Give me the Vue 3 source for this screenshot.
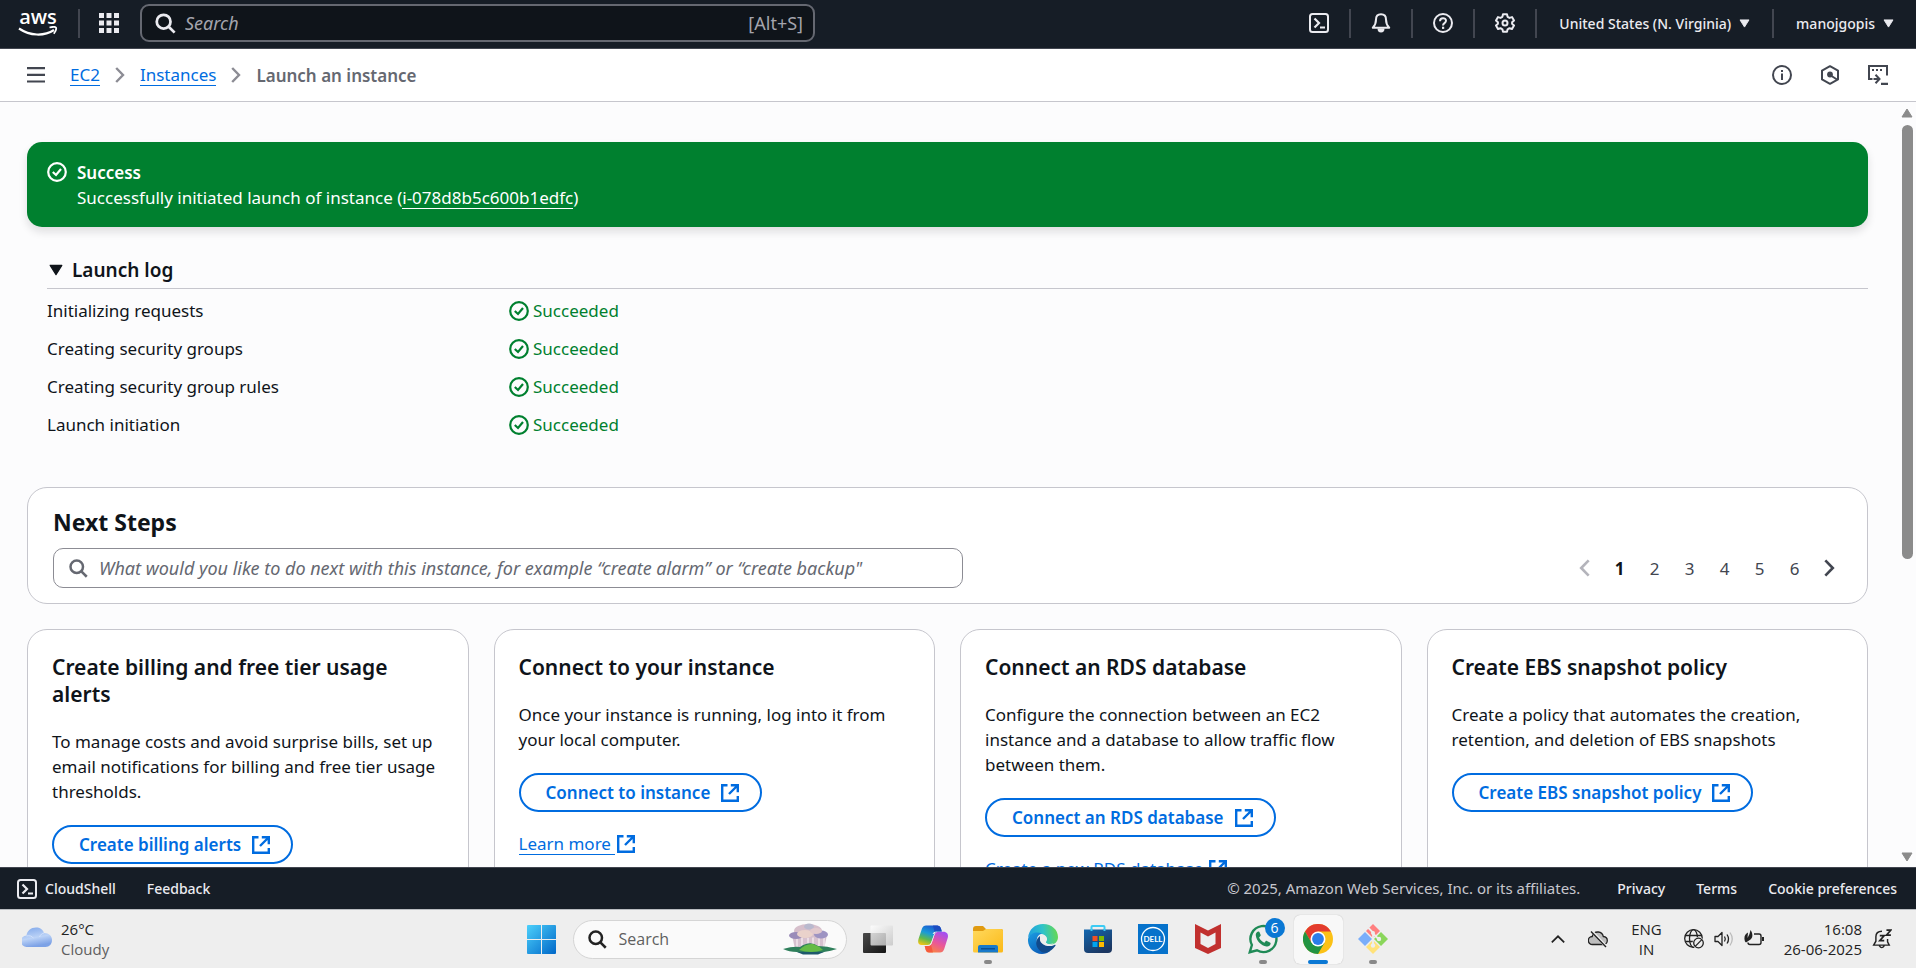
<script setup>
const logRows = [
  'Initializing requests',
  'Creating security groups',
  'Creating security group rules',
  'Launch initiation',
]
const pages = [1, 2, 3, 4, 5, 6]
const cards = [
  {
    title: 'Create billing and free tier usage alerts',
    text: 'To manage costs and avoid surprise bills, set up email notifications for billing and free tier usage thresholds.',
    action: 'Create billing alerts',
  },
  {
    title: 'Connect to your instance',
    text: 'Once your instance is running, log into it from your local computer.',
    action: 'Connect to instance',
    link: 'Learn more',
  },
  {
    title: 'Connect an RDS database',
    text: 'Configure the connection between an EC2 instance and a database to allow traffic flow between them.',
    action: 'Connect an RDS database',
    link: 'Create a new RDS database',
  },
  {
    title: 'Create EBS snapshot policy',
    text: 'Create a policy that automates the creation, retention, and deletion of EBS snapshots',
    action: 'Create EBS snapshot policy',
  },
]
const tools = [
  { icon: 'shell', label: 'CloudShell' },
  { icon: 'bell', label: 'Notifications' },
  { icon: 'help', label: 'Help' },
  { icon: 'gear', label: 'Settings' },
]
const apps = [
  { icon: 'taskview', label: 'Task view' },
  { icon: 'copilot', label: 'Copilot' },
  { icon: 'explorer', label: 'File Explorer', open: true },
  { icon: 'edge', label: 'Edge' },
  { icon: 'store', label: 'Store' },
  { icon: 'dell', label: 'Dell', caption: 'DELL' },
  { icon: 'mcafee', label: 'McAfee' },
  { icon: 'whatsapp', label: 'WhatsApp', open: true, badge: 6 },
  { icon: 'chrome', label: 'Chrome', open: true, active: true },
  { icon: 'git', label: 'Git', open: true },
]
</script>

<template>
  <div class="screen">
    <svg class="defs" aria-hidden="true">
      <defs>
        <linearGradient id="g-win" x1="0" y1="0" x2="1" y2="1">
          <stop offset="0" stop-color="#4cd0fb" /><stop offset="1" stop-color="#0067c8" />
        </linearGradient>
        <linearGradient id="g-cloud" x1="0" y1="0" x2="0.3" y2="1">
          <stop offset="0" stop-color="#7ea6ea" /><stop offset="0.6" stop-color="#bcd3f7" /><stop offset="1" stop-color="#7da2e6" />
        </linearGradient>
        <linearGradient id="g-folder" x1="0" y1="0" x2="1" y2="1">
          <stop offset="0" stop-color="#ffd95e" /><stop offset="1" stop-color="#fbb917" />
        </linearGradient>
        <linearGradient id="g-edge1" x1="0" y1="0.4" x2="1" y2="0.3">
          <stop offset="0" stop-color="#1f9fdf" /><stop offset="0.5" stop-color="#2fc3c9" /><stop offset="1" stop-color="#68d94c" />
        </linearGradient>
        <linearGradient id="g-edge2" x1="0" y1="0" x2="0.6" y2="1">
          <stop offset="0" stop-color="#1b9de2" /><stop offset="1" stop-color="#0a5cb8" />
        </linearGradient>
        <linearGradient id="g-store" x1="0" y1="0" x2="0.6" y2="1">
          <stop offset="0" stop-color="#1267b0" /><stop offset="1" stop-color="#1c3761" />
        </linearGradient>
        <linearGradient id="g-co1" x1="0.6" y1="0" x2="0.2" y2="1">
          <stop offset="0" stop-color="#1b58d0" /><stop offset="0.4" stop-color="#1a9bd8" /><stop offset="0.7" stop-color="#5fb94d" /><stop offset="1" stop-color="#f0c514" />
        </linearGradient>
        <linearGradient id="g-co2" x1="0.7" y1="0" x2="0.2" y2="1">
          <stop offset="0" stop-color="#a44ff0" /><stop offset="0.5" stop-color="#e9569a" /><stop offset="1" stop-color="#fb8a38" />
        </linearGradient>
        <linearGradient id="g-dark" x1="0" y1="0" x2="1" y2="1">
          <stop offset="0" stop-color="#4a4a4a" /><stop offset="1" stop-color="#151515" />
        </linearGradient>
        <linearGradient id="g-light" x1="0" y1="0" x2="1" y2="1">
          <stop offset="0" stop-color="#ffffff" /><stop offset="1" stop-color="#c4c4c4" />
        </linearGradient>
      </defs>

      <symbol id="i-apps" viewBox="0 0 20 20">
        <path fill="currentColor" d="M0 0h5v5H0zM7.500 0h5v5h-5zM15 0h5v5h-5zM0 7.500h5v5H0zM7.500 7.500h5v5h-5zM15 7.500h5v5h-5zM0 15h5v5H0zM7.500 15h5v5h-5zM15 15h5v5h-5z" />
      </symbol>
      <symbol id="i-search" viewBox="0 0 16 16">
        <g fill="none" stroke="currentColor" stroke-width="2"><circle cx="7" cy="7" r="5" /><path d="m10.500 10.500 4.500 4.500" /></g>
      </symbol>
      <symbol id="i-shell" viewBox="0 0 20 20">
        <g fill="none" stroke="currentColor" stroke-width="2"><rect x="1" y="1" width="18" height="18" rx="2.500" /><path d="m5.500 5.500 4.500 4.500-4.500 4.500M11 14.500h5" stroke-width="2.200" /></g>
      </symbol>
      <symbol id="i-bell" viewBox="0 0 20 20">
        <path fill="none" stroke="currentColor" stroke-width="2" stroke-linejoin="round" d="M10 1.300C6.800 1.300 5 3.500 5 6.500c0 4-1 6-3.200 8.300h16.400C16 12.500 15 10.500 15 6.500c0-3-1.800-5.200-5-5.200z" />
        <path fill="currentColor" d="M6.500 15.500h7a3.500 4 0 0 1-7 0z" />
      </symbol>
      <symbol id="i-help" viewBox="0 0 20 20">
        <g fill="none" stroke="currentColor" stroke-width="2"><circle cx="10" cy="10" r="9" /><path d="M7 8.200c0-4 6-4 6-.4 0 2.400-3 2.200-3 4.700" /></g>
        <rect x="9" y="13.700" width="2.200" height="2.200" fill="currentColor" />
      </symbol>
      <symbol id="i-gear" viewBox="0 0 20 20">
        <g fill="none" stroke="currentColor" stroke-width="2" stroke-linejoin="round"><path d="M8 1.200h4l.6 2.600 1.900 1.100 2.500-.8 2 3.400-1.900 1.800v1.500l1.900 1.800-2 3.400-2.500-.8-1.900 1.100-.6 2.500H8l-.6-2.500-1.900-1.100-2.500.8-2-3.400 1.900-1.800V9.300L1 7.500l2-3.400 2.500.8 1.900-1.100z" /><circle cx="10" cy="10" r="2.500" /></g>
      </symbol>
      <symbol id="i-menu" viewBox="0 0 18 16">
        <path fill="currentColor" d="M0 0h18v2.200H0zM0 6.700h18v2.200H0zM0 13.400h18v2.200H0z" />
      </symbol>
      <symbol id="i-chev" viewBox="0 0 10 16">
        <path fill="none" stroke="currentColor" stroke-width="2.400" d="m1.200 1 6.800 7-6.800 7" />
      </symbol>
      <symbol id="i-info" viewBox="0 0 20 20">
        <circle cx="10" cy="10" r="9" fill="none" stroke="currentColor" stroke-width="2" />
        <path fill="currentColor" d="M9 5h2v2H9zM9 8.500h2V15H9z" />
      </symbol>
      <symbol id="i-hex" viewBox="0 0 20 20">
        <path fill="none" stroke="currentColor" stroke-width="2" stroke-linejoin="round" d="m10 1.200 8 4.400v8.800l-8 4.400-8-4.400V5.600z" />
        <circle cx="10" cy="9.500" r="2.900" fill="currentColor" /><path d="m10 10 7 4.500" stroke="currentColor" stroke-width="2" />
      </symbol>
      <symbol id="i-console" viewBox="0 0 20 20">
        <path fill="none" stroke="currentColor" stroke-width="2" d="M4.500 14H1V1h18v9.500M5.500 14h5.500M7.500 9.800l4 4.200-4 4.200" />
        <path fill="currentColor" d="M4 4h2v2H4zM8 4h2v2H8zM12 4h2v2h-2zM13 17.700h7V20h-7z" />
      </symbol>
      <symbol id="i-check" viewBox="0 0 20 20">
        <g fill="none" stroke="currentColor" stroke-width="2.200"><circle cx="10" cy="10" r="8.800" /><path d="m5.800 10 3.200 3 5-6" /></g>
      </symbol>
      <symbol id="i-ext" viewBox="0 0 18 18">
        <g fill="none" stroke="currentColor" stroke-width="2.400"><path d="M6.500 1.200H1.200v15.600h15.600V12" /><path d="M9.800 1.200h7v7M8 10l8.500-8.500" /></g>
      </symbol>
      <symbol id="i-caret" viewBox="0 0 12 10"><path fill="currentColor" stroke="currentColor" stroke-linejoin="round" d="M1 1h10L6 9z" /></symbol>

      <symbol id="i-weather" viewBox="0 0 30 20">
        <path fill="url(#g-cloud)" d="M5 20a5.500 5.500 0 0 1-.5-11.500C5 4 9 .5 14 .5c4 0 7 2 8 5.500 5 0 8 3 8 7 0 4-2.500 7-6.500 7z" />
        <path fill="none" stroke="#d7e5fc" stroke-width="1" d="M4.500 9c3-.8 5.500 0 7 2.300M17.500 10c1-2.500 2.600-3.700 4.700-4" opacity=".8" />
      </symbol>
      <symbol id="i-win" viewBox="0 0 29 29">
        <path fill="url(#g-win)" d="M0 1q0-1 1-1h13v14H0zM15 0h13q1 0 1 1v13H15zM0 15h14v14H1q-1 0-1-1zM15 15h14v13q0 1-1 1H15z" />
      </symbol>
      <symbol id="i-storm" viewBox="0 0 54 32">
        <path fill="#cdb3c4" d="M9 12h35l-3 14H12z" opacity=".8" />
        <path stroke="#f1e4ea" stroke-width="1.600" d="M14 14v11M19 14v10M25 14v9M30 14v10M36 14v10M41 14v10" />
        <ellipse cx="25" cy="8" rx="14" ry="7" fill="#d6bfcb" /><ellipse cx="13" cy="12.500" rx="7" ry="3.500" fill="#9a8cb9" /><ellipse cx="38" cy="11.500" rx="7" ry="4" fill="#9d93c2" />
        <ellipse cx="22" cy="11" rx="8" ry="4" fill="#ead2cb" /><ellipse cx="26" cy="3.500" rx="5" ry="3" fill="#b9b9ce" /><ellipse cx="33" cy="8" rx="6" ry="3" fill="#e2c9cd" />
        <path fill="#2f7f5b" d="M0 26q10-3 17-2 10-7 18-1 9 0 19 3-6 2-13 3-14 4-27 0Q6 29 0 26z" />
        <path fill="#65bb46" d="M16 27q7-7 14-6 6 2 10 6-12 4-24 0z" /><path fill="#1e596b" d="M14 29h27l-6 2.500H20z" />
      </symbol>
      <symbol id="i-taskview" viewBox="0 0 30 30">
        <rect y="9" width="23" height="20" rx="1" fill="url(#g-dark)" /><rect x="7.500" y="1.500" width="22.500" height="20" rx="1" fill="url(#g-light)" opacity=".82" />
      </symbol>
      <symbol id="i-copilot" viewBox="0 0 30 30">
        <path fill="url(#g-co1)" d="M8 1.500h11.500q2.500 0 3.300 2.500l1 3.500h-4.300q-2.500 0-3.400 2.800l-3 8.400q-1 2.300-3.500 2.300H3.500Q-1 20.500.5 15L4 4.500q1.200-3 4-3z" />
        <path fill="url(#g-co2)" d="M22 28.500H11q-2.500 0-3.300-2.500l-1-4h3.800q2.300 0 3.100-2.500l3-9q1-2.800 3.400-2.800h6.500Q31 9 29.700 14l-3.500 11q-1.200 3.500-4.200 3.500z" />
        <path fill="#1c49bd" d="M15 1.500h4.500q2.500 0 3.300 2.500l1 3.500h-4.300q-1.800 0-2.700 1.500z" opacity=".8" />
        <path fill="#f4503b" d="M15 28.500h-4q-2.500 0-3.300-2.500l-1-4h3.800q1.500 0 2.500-1.200z" opacity=".8" />
        <path fill="#eee" d="M14.500 9.500q1.500-2 4-2h1q-2.500 0-3.400 2.800l-3 8.400Q12 21 10 22q2.800-.5 3.600-2.800l3-9z" />
      </symbol>
      <symbol id="i-explorer" viewBox="0 0 30 30">
        <path fill="#e09a10" d="M0 5q0-3 3-3h7l3 3h15q2 0 2 2v8H0z" /><path fill="url(#g-folder)" d="M0 7h10l3-2h15q2 0 2 2v20q0 1.500-1.500 1.500h-27Q0 28.500 0 27z" />
        <path fill="#1879ca" d="M5 28.500V23q0-2 2-2h16q2 0 2 2v5.500z" /><path fill="#0a4f94" d="M8 24h14v1.500H8z" />
      </symbol>
      <symbol id="i-edge" viewBox="0 0 30 30">
        <path fill="url(#g-edge1)" d="M0 14C1 5 7 0 15 0c9 0 15 6 15 13 0 5-3.500 7.500-7.500 7.500-3 0-5-1.200-4.500-2.500 2.500-3 .5-7-4-8C8 8.500 2 10 0 14z" />
        <path fill="url(#g-edge2)" d="M0 15c1.500-6 8-8 14-5.500-4 1-6 5-5 9.500 1 5 6 9 13 8-2 2-5 3-8 3C5 29.500-.5 22.500 0 15z" />
        <path fill="#114a8b" d="M12 12c-4 3-5 8-2 12.500 3 4.500 8 5.500 12 2.500 2.500-1.700 4.500-3.500 5.700-5.700-.2-.8-.7-.7-1.200-.4-6 3-14 .1-14.500-5.400-.1-1.500 0-2.500 0-3.500z" />
        <path fill="#eee" d="M12.500 12.500c2-1.500 6-.5 6 2.500 0 1.500-1.300 2-.8 3.300 1.300 2.200 5.300 2.200 8 1-4 3.500-13.500 1-13.700-4.300 0-1 0-1.700.5-2.500z" />
      </symbol>
      <symbol id="i-store" viewBox="0 0 30 30">
        <path fill="none" stroke="#3ccbf4" stroke-width="2" d="M8.500 7V3q0-1 1-1h11q1 0 1 1v4" />
        <path fill="url(#g-store)" d="M1 5.500h28V25q0 4-4 4H5q-4 0-4-4z" /><path stroke="#3ccbf4" stroke-width="2" d="M8.500 5v2M21.500 5v2" />
        <path fill="#f25022" d="M9.500 12h5v5h-5z" /><path fill="#7fba00" d="M16 12h5v5h-5z" /><path fill="#00a4ef" d="M9.500 18h5v5h-5z" /><path fill="#ffb900" d="M16 18h5v5h-5z" />
      </symbol>
      <symbol id="i-dell" viewBox="0 0 30 30">
        <path fill="#0672cb" d="M0 0h30v30H0z" /><circle cx="15" cy="15" r="11.500" fill="none" stroke="#fff" stroke-width="1.300" />
      </symbol>
      <symbol id="i-mcafee" viewBox="0 0 30 30">
        <path fill="#c1302e" fill-rule="evenodd" d="m2 0 13 6.500L28 0v24l-13 6-13-6zM7.500 8.500V20l7.500 4 7.500-4V8.500L15 12.500z" />
      </symbol>
      <symbol id="i-whatsapp" viewBox="0 0 30 30">
        <path fill="none" stroke="#1f8a56" stroke-width="2.400" d="M1.800 28.200 3.900 21A13 13 0 1 1 9 26.300z" />
        <path fill="#1f8a56" d="M10.300 7.500c-1.700.4-2.800 2-2.500 4 .8 5.500 5.300 10 10.700 11 2 .3 3.700-.8 4.100-2.700.1-.7-.1-1-.7-1.300l-3-1.500c-.5-.2-.9-.2-1.300.2l-1.200 1.500c-2.500-1-4.300-2.800-5.300-5.200l1.300-1.400c.4-.4.4-.8.2-1.300l-1.200-2.700c-.2-.5-.5-.7-1.100-.6z" />
      </symbol>
      <symbol id="i-chrome" viewBox="0 0 30 30">
        <circle cx="15" cy="15" r="15" fill="#fbc116" /><path fill="#e33b2e" d="M2 7.500a15 15 0 0 1 26 0H15L8.500 18.700z" />
        <path fill="#229342" d="M2 7.500A15 15 0 0 0 15 30l6.500-11.300H8.500z" /><circle cx="15" cy="15" r="7.500" fill="#fff" /><circle cx="15" cy="15" r="5.900" fill="#2b7de9" />
      </symbol>
      <symbol id="i-git" viewBox="0 0 30 30">
        <path fill="#ff7f7f" d="m15 0 7 7-7 7-7-7z" /><path fill="#8ad65b" d="m23 8 7 7-7 7-7-7z" /><path fill="#ffe27a" d="m15 16 7 7-7 7-7-7z" /><path fill="#7aaefa" d="m7 8 7 7-7 7-7-7z" />
        <path fill="none" stroke="#eee" stroke-width="1.800" d="m10 3.500 5 5V21M15 9.500l6 6" /><circle cx="15" cy="9" r="2" fill="#eee" /><circle cx="21" cy="15" r="2.200" fill="#eee" /><circle cx="15" cy="21.500" r="2.200" fill="#eee" />
      </symbol>
      <symbol id="i-up" viewBox="0 0 14 8"><path fill="none" stroke="currentColor" stroke-width="1.700" d="m.8 7.300 6.200-6 6.200 6" /></symbol>
      <symbol id="i-offcloud" viewBox="0 0 20 18">
        <path fill="#bdbdbd" stroke="#222" stroke-width="1.300" d="M4.500 14.500a4 4 0 0 1-.3-8C5 3.500 7.500 1.800 10.300 2c2.700.2 4.500 2 5 4.500 2.500.3 4 2 4 4s-1.500 4-4 4z" />
        <path stroke="#eee" stroke-width="3" d="m4 1.500 14 15" /><path stroke="#222" stroke-width="1.400" d="m3 1.500 15 15.500" />
      </symbol>
      <symbol id="i-globe" viewBox="0 0 20 20">
        <g fill="none" stroke="#222" stroke-width="1.300"><circle cx="9.500" cy="9.500" r="8.800" /><ellipse cx="9.500" cy="9.500" rx="4" ry="8.800" /><path d="M1.500 6.500h16M1.500 12.500h8" /></g>
        <circle cx="14.500" cy="14" r="6" fill="#eee" /><g fill="none" stroke="#222" stroke-width="1.300"><circle cx="14.500" cy="14" r="4.800" /><path d="m11.200 17.400 6.600-6.800" /></g>
      </symbol>
      <symbol id="i-sound" viewBox="0 0 20 18">
        <g fill="none" stroke="#222" stroke-width="1.300" stroke-linejoin="round"><path d="M1 6.500h3l4-4v13l-4-4H1z" /><path d="M10.500 6.500q1.600 2.500 0 5M13 4.500q3 4.500 0 9" /></g>
        <path fill="none" stroke="#bbb" stroke-width="1.300" d="M16 2.500q4.500 6.500 0 13" />
      </symbol>
      <symbol id="i-battery" viewBox="0 0 20 18">
        <path fill="none" stroke="#222" stroke-width="1.400" d="M10 4h5q2 0 2 2v6.500q0 2-2 2H6q-2 0-2-2" />
        <path fill="#222" d="M18 7h2v4h-2zM6.500 0C9 3 9.500 9 5 10.500L2 12.500 1 11.500C-.5 7 1 4 4 2.500L3.500 8 5.500 4z" />
      </symbol>
      <symbol id="i-dnd" viewBox="0 0 18 18">
        <path fill="none" stroke="#222" stroke-width="1.300" d="M9 2C5.500 2 3.500 4 3.500 7v4L1.500 14.500h14l-1.500-3V9M6.500 15q2.300 3.500 4.600 0" />
        <path fill="none" stroke="#222" stroke-width="1.500" d="M7 6h4l-4 4.500h4M13 1h4l-4 4.500h4" />
      </symbol>
    </svg>

    <header class="topnav">
      <a class="logo" href="#" aria-label="AWS home">
        <span>aws</span>
        <svg viewBox="0 0 40 12"><path fill="none" stroke="#fff" stroke-width="2.200" d="M1 2.500c11 7.500 25 8 35 1.500" /><path fill="none" stroke="#fff" stroke-width="1.800" d="M31.500 1.500c3-.8 6-.8 6.500.2.400 1-.6 4-2.200 6" /></svg>
      </a>
      <i class="sep"></i>
      <button class="icon-btn apps" aria-label="Services"><svg class="i20"><use href="#i-apps" /></svg></button>
      <label class="nav-search">
        <svg class="i22"><use href="#i-search" /></svg>
        <input type="search" placeholder="Search" aria-label="Search" />
        <span>[Alt+S]</span>
      </label>
      <div class="tools">
        <template v-for="t in tools" :key="t.icon">
          <button class="icon-btn tool" :aria-label="t.label"><svg class="i20"><use :href="'#i-' + t.icon" /></svg></button>
          <i class="sep"></i>
        </template>
        <button class="menu-btn">United States (N. Virginia)<svg><use href="#i-caret" /></svg></button>
        <i class="sep"></i>
        <button class="menu-btn">manojgopis<svg><use href="#i-caret" /></svg></button>
      </div>
    </header>

    <div class="crumbbar">
      <button class="icon-btn" aria-label="Open navigation"><svg class="menu"><use href="#i-menu" /></svg></button>
      <nav class="crumbs" aria-label="Breadcrumb">
        <a href="#">EC2</a>
        <svg><use href="#i-chev" /></svg>
        <a href="#">Instances</a>
        <svg><use href="#i-chev" /></svg>
        <span>Launch an instance</span>
      </nav>
      <div class="crumb-tools">
        <button class="icon-btn" aria-label="Info"><svg class="i20"><use href="#i-info" /></svg></button>
        <button class="icon-btn" aria-label="Resources"><svg class="i20"><use href="#i-hex" /></svg></button>
        <button class="icon-btn" aria-label="Console code"><svg class="i20"><use href="#i-console" /></svg></button>
      </div>
    </div>

    <div class="body">
      <main>
        <section class="alert" role="status">
          <svg class="i20"><use href="#i-check" /></svg>
          <div>
            <strong>Success</strong>
            <p>Successfully initiated launch of instance (<a href="#">i-078d8b5c600b1edfc</a>)</p>
          </div>
        </section>

        <section class="log">
          <h3><button><svg><use href="#i-caret" /></svg>Launch log</button></h3>
          <dl>
            <template v-for="r in logRows" :key="r">
              <dt>{{ r }}</dt>
              <dd><svg class="i20"><use href="#i-check" /></svg>Succeeded</dd>
            </template>
          </dl>
        </section>

        <section class="steps">
          <h2>Next Steps</h2>
          <div class="steps-row">
            <label class="find">
              <svg class="i20"><use href="#i-search" /></svg>
              <input type="search" aria-label="Find next step" placeholder="What would you like to do next with this instance, for example “create alarm” or “create backup&quot;" />
            </label>
            <nav class="pager" aria-label="Pagination">
              <button class="prev" disabled aria-label="Previous page"><svg><use href="#i-chev" /></svg></button>
              <button v-for="p in pages" :key="p" :class="{ current: p === 1 }">{{ p }}</button>
              <button aria-label="Next page"><svg><use href="#i-chev" /></svg></button>
            </nav>
          </div>
        </section>

        <section class="cards">
          <article v-for="c in cards" :key="c.title" class="card">
            <h3>{{ c.title }}</h3>
            <p>{{ c.text }}</p>
            <button class="pill">{{ c.action }}<svg class="i18"><use href="#i-ext" /></svg></button>
            <a v-if="c.link" href="#" class="more"><span>{{ c.link }}</span><svg class="i18"><use href="#i-ext" /></svg></a>
          </article>
        </section>
      </main>
      <div class="scrollbar" aria-hidden="true">
        <svg class="arrow flip"><use href="#i-caret" /></svg>
        <div class="track"><div class="thumb"></div></div>
        <svg class="arrow"><use href="#i-caret" /></svg>
      </div>
    </div>

    <footer class="foot">
      <button class="shell"><svg class="i20"><use href="#i-shell" /></svg>CloudShell</button>
      <a href="#">Feedback</a>
      <span class="copy">© 2025, Amazon Web Services, Inc. or its affiliates.</span>
      <a href="#">Privacy</a>
      <a href="#">Terms</a>
      <a href="#">Cookie preferences</a>
    </footer>

    <div class="taskbar">
      <div class="weather">
        <svg><use href="#i-weather" /></svg>
        <div><span>26°C</span><span class="dim">Cloudy</span></div>
      </div>
      <div class="dock">
        <button class="app" aria-label="Start"><svg class="i29"><use href="#i-win" /></svg></button>
        <label class="win-search">
          <svg class="i20"><use href="#i-search" /></svg>
          <input type="search" placeholder="Search" aria-label="Search Windows" />
          <svg class="storm"><use href="#i-storm" /></svg>
        </label>
        <button v-for="a in apps" :key="a.icon" class="app" :class="{ open: a.open, active: a.active }" :aria-label="a.label">
          <svg class="i30"><use :href="'#i-' + a.icon" /></svg>
          <span v-if="a.caption" class="caption">{{ a.caption }}</span>
          <span v-if="a.badge" class="badge">{{ a.badge }}</span>
        </button>
      </div>
      <div class="tray">
        <svg class="up"><use href="#i-up" /></svg>
        <svg class="off"><use href="#i-offcloud" /></svg>
        <div class="lang"><span>ENG</span><span>IN</span></div>
        <div class="status">
          <svg class="i20"><use href="#i-globe" /></svg>
          <svg class="i20"><use href="#i-sound" /></svg>
          <svg class="i20"><use href="#i-battery" /></svg>
        </div>
        <div class="clock"><span>16:08</span><span>26-06-2025</span></div>
        <svg class="i20"><use href="#i-dnd" /></svg>
      </div>
    </div>
  </div>
</template>

<style>
body { margin: 0; overflow: hidden; }
</style>

<style scoped>
* { box-sizing: border-box; }
.screen {
  display: flex; flex-direction: column; height: 100vh;
  font-family: "Noto Sans", "Open Sans", sans-serif; font-size: 17px; line-height: 25px;
  color: #0f141a; background: #fcfcfd;
}
.defs { position: absolute; width: 0; height: 0; }
svg { display: block; flex: none; }
h2, h3, p, dl, dd { margin: 0; }
button { font: inherit; color: inherit; background: none; border: 0; padding: 0; cursor: pointer; }
input { font: inherit; color: inherit; background: none; border: 0; outline: 0; padding: 0; min-width: 0; flex: 1; }
a { color: #006ce0; text-decoration: none; }
.i18 { width: 18px; height: 18px; }
.i20 { width: 20px; height: 20px; }
.i22 { width: 22px; height: 22px; }
.i29 { width: 29px; height: 29px; }
.i30 { width: 30px; height: 30px; }
.icon-btn { display: flex; align-items: center; justify-content: center; }

.topnav {
  display: flex; align-items: center; height: 49px; padding: 0 22px 2px 18px;
  background: #161d26; border-bottom: 1px solid #424650; color: #ebebf0;
}
.logo { width: 40px; color: #fff; }
.logo span { display: block; font: 600 20px/18px "Open Sans", sans-serif; text-align: center; }
.logo svg { width: 40px; height: 12px; }
.sep { width: 2px; height: 29px; background: #424650; }
.logo + .sep { margin-left: 20px; }
.apps { margin: 0 21px 0 19px; }
.nav-search {
  display: flex; align-items: center; gap: 9px; flex: 0 1 675px; height: 38px; padding: 0 10px 0 12px;
  border: 2px solid #656871; border-radius: 9px; background: #0f141a; font-size: 18px;
}
.nav-search input::placeholder { color: #a4a4ad; font-style: italic; opacity: 1; }
.nav-search span { color: #a4a4ad; }
.tools { display: flex; align-items: center; margin-left: auto; font-size: 14px; font-weight: 500; }
.tool { width: 60px; height: 30px; }
.menu-btn { display: flex; align-items: center; gap: 8px; margin-left: 22px; }
.menu-btn svg { width: 11px; height: 9px; }
.menu-btn + .sep { margin-left: 22px; }

.crumbbar {
  display: flex; align-items: center; height: 53px; padding: 0 28px 0 27px;
  background: #fff; border-bottom: 1px solid #c6c6cd; color: #424650;
}
.menu { width: 18px; height: 16px; }
.crumbs { display: flex; align-items: center; gap: 15px; margin-left: 25px; }
.crumbs svg { width: 10px; height: 16px; color: #8c8c94; }
.crumbs a { line-height: 21px; border-bottom: 1px solid; }
.crumbs span { font-weight: 600; color: #656871; }
.crumb-tools { display: flex; gap: 28px; margin-left: auto; }

.body { display: flex; flex: 1; min-height: 0; }
main { flex: 1; min-width: 0; overflow: hidden; padding: 40px 30px 0 27px; }
.alert {
  display: flex; gap: 10px; padding: 18px 20px 17px; border-radius: 15px;
  background: #00802f; color: #fff; box-shadow: 0 5px 8px rgba(15, 20, 26, .12);
}
.alert svg { margin-top: 2px; }
.alert strong { display: block; font-weight: 600; }
.alert a { display: inline-block; line-height: 21px; color: #fff; border-bottom: 1px solid; }
.log { margin: 30px 0 50px 20px; }
.log h3 { padding-bottom: 5px; border-bottom: 1px solid #c6c6cd; font-size: 19px; font-weight: 600; line-height: 26px; }
.log h3 button { display: flex; align-items: center; gap: 9px; padding-left: 2px; }
.log h3 svg { width: 14px; height: 12px; }
.log dl { display: grid; grid-template-columns: 1fr 3fr; column-gap: 9px; row-gap: 14px; margin-top: 10px; line-height: 24px; }
.log dd { display: flex; align-items: center; gap: 4px; color: #00802f; }

.steps, .card { background: #fff; border: 1px solid #c6c6cd; border-radius: 20px; }
.steps { padding: 19px 25px 15px; }
.steps h2 { font-size: 23px; font-weight: 700; line-height: 30px; }
.steps-row { display: flex; align-items: center; justify-content: space-between; margin-top: 11px; }
.find {
  display: flex; align-items: center; gap: 11px; flex: 0 1 910px; height: 40px; padding: 0 14px;
  border: 1px solid #8c8c94; border-radius: 10px; color: #656871; font-size: 18px;
}
.find input::placeholder { color: #656871; font-style: italic; opacity: 1; }
.pager { display: flex; color: #424650; }
.pager button { display: flex; justify-content: center; align-items: center; width: 35px; height: 30px; }
.pager button:last-child { margin-right: -5px; }
.pager svg { width: 11px; height: 18px; }
.pager .prev svg { transform: scaleX(-1); color: #b4b4bb; }
.pager .current { font-weight: 700; color: #0f141a; }

.cards { display: grid; grid-template-columns: repeat(4, 1fr); gap: 25px; margin-top: 25px; }
.card { display: flex; flex-direction: column; align-items: flex-start; gap: 21px; padding: 24px; }
.card h3 { font-size: 21px; font-weight: 600; line-height: 27px; }
.pill {
  display: flex; align-items: center; gap: 11px; height: 39px; padding: 0 21px 0 25px;
  border: 2px solid #006ce0; border-radius: 20px; color: #006ce0; font-weight: 600;
}
.more { display: flex; align-items: center; gap: 2px; }
.more span { line-height: 21px; border-bottom: 1px solid; padding-right: 4px; }

.scrollbar { display: flex; flex-direction: column; align-items: center; width: 18px; padding: 6px 0 5px; color: #8b8b8b; }
.arrow { width: 12px; height: 10px; }
.flip { transform: scaleY(-1); }
.track { flex: 1; width: 11px; padding: 7px 0 4px; }
.thumb { height: 60%; border-radius: 6px; background: #8b8b8b; }

.foot {
  display: flex; align-items: center; gap: 31px; height: 42px; padding: 0 19px 0 17px;
  background: #161d26; border-top: 1px solid #424650; color: #ebebf0; font-size: 14px; font-weight: 500;
}
.foot a { color: #ebebf0; }
.shell { display: flex; align-items: center; gap: 8px; }
.copy { margin-left: auto; margin-right: 6px; color: #c6c6cd; font-size: 15px; font-weight: 400; }

.taskbar {
  display: grid; grid-template-columns: 1fr auto 1fr; align-items: center; height: 59px; padding: 0 24px 0 22px;
  background: #eee; border-top: 1px solid #b9bcc0; font-family: "Open Sans", sans-serif; font-size: 15px; line-height: 20px; color: #222;
}
.taskbar span { display: block; }
.weather { display: flex; align-items: center; gap: 9px; }
.weather svg { width: 30px; height: 20px; margin-bottom: 4px; }
.dim { color: #5f5f5f; }
.dock { display: flex; align-items: center; }
.app { position: relative; display: flex; align-items: center; justify-content: center; width: 49px; height: 49px; margin: 0 3px; border-radius: 6px; }
.app.active { background: #f8f8f8; box-shadow: 0 0 1px #aaa; }
.app.open::after { content: ""; position: absolute; bottom: 0; width: 8px; height: 4px; border-radius: 2px; background: #888; }
.app.active::after { width: 20px; background: #0a78d4; }
.badge { position: absolute; top: 3px; right: 3px; width: 20px; height: 20px; border-radius: 50%; background: #0a78d4; color: #fff; font-size: 14px; line-height: 20px; text-align: center; }
.caption { position: absolute; inset: 0; color: #fff; font: 700 8px/49px Lato, sans-serif; text-align: center; }
.win-search {
  display: flex; align-items: center; gap: 12px; width: 274px; height: 39px; margin: 0 4px; padding: 0 9px 0 13px;
  border: 1px solid #d5d5d5; border-radius: 20px; background: #fafafa; font-size: 16px;
}
.win-search input::placeholder { color: #5f5f5f; opacity: 1; }
.storm { width: 54px; height: 32px; }
.tray { display: flex; align-items: center; justify-content: flex-end; gap: 10px; }
.up { width: 14px; height: 8px; margin-right: 13px; }
.off { width: 20px; height: 18px; margin-right: 13px; }
.lang { text-align: center; margin-right: 12px; }
.status { display: flex; gap: 10px; margin-right: 10px; }
.clock { text-align: right; }
</style>
